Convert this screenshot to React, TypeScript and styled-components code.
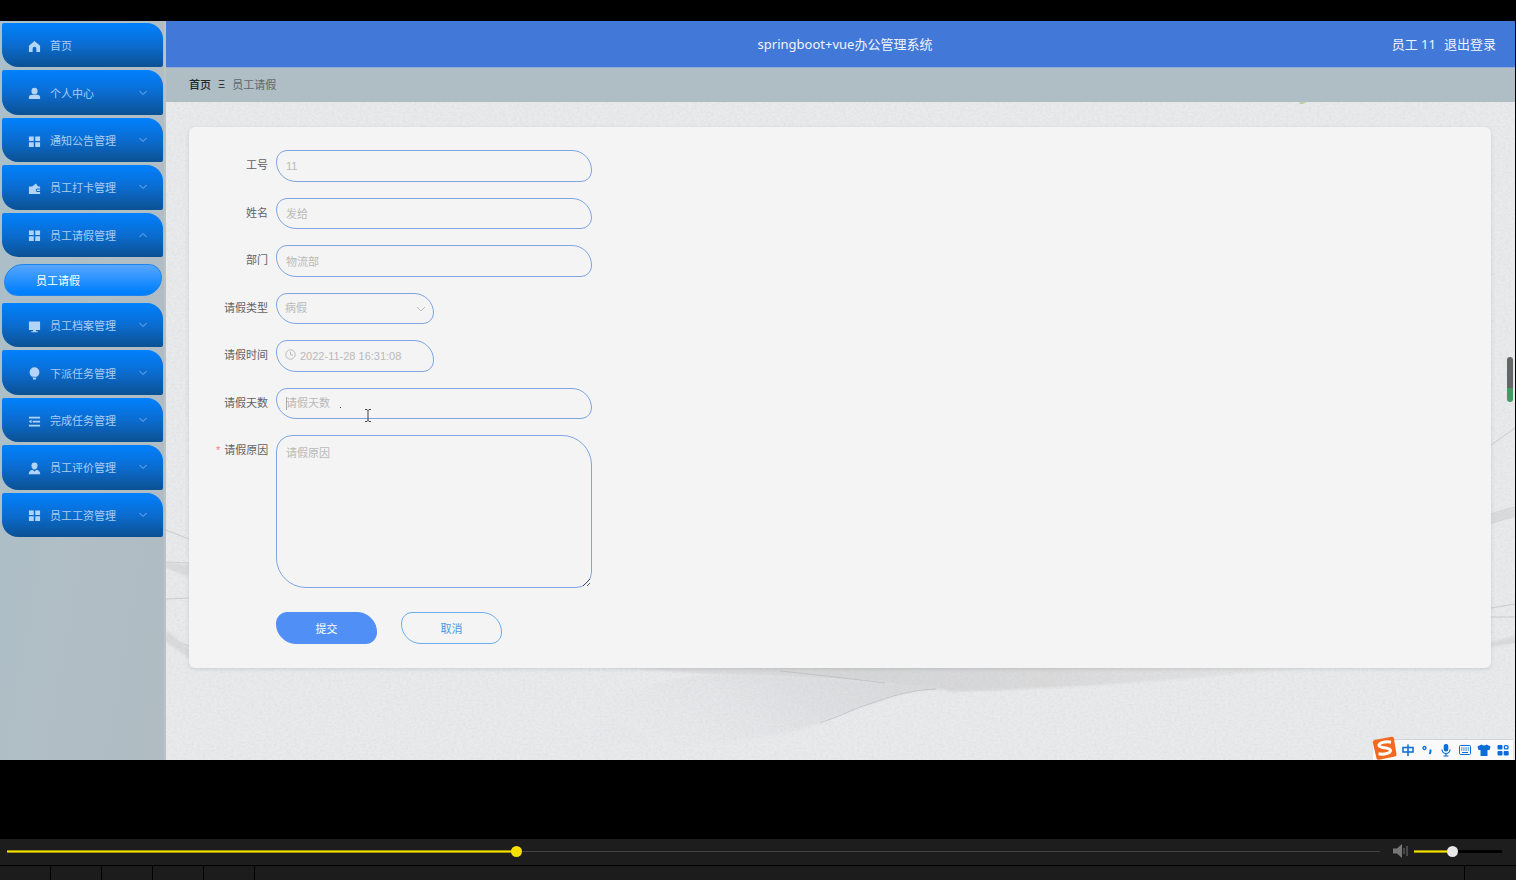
import React, { useState } from 'react';
import styled, { createGlobalStyle, css } from 'styled-components';

const GlobalStyle = createGlobalStyle`
  * { box-sizing: border-box; }
  body { margin: 0; background: #000; }
  body, button, input, select, textarea {
    font-family: "Liberation Sans", "Noto Sans CJK SC", sans-serif;
    font-size: 11px;
  }
  ul { list-style: none; margin: 0; padding: 0; }
  a { color: inherit; text-decoration: none; }
`;

const Page = styled.div`
  min-height: 100vh;
  display: flex;
  flex-direction: column;
  background: #000;
`;

const Screen = styled.div`
  position: relative;
  display: grid;
  grid-template-columns: 166px 1fr;
  margin: 21px 1px 0 0;
`;

/* ---------- sidebar ---------- */

const Sidebar = styled.nav`
  background: linear-gradient(100deg, #a9bfca 0%, #b0bec5 50%, #b0bbc2 100%);
  border-right: 2px solid #bcc3c7;
  padding: 2px 1px 0 2px;
`;

const Menu = styled.ul`
  display: flex;
  flex-direction: column;
  gap: 3px;
  height: 514px;
`;

const MenuItem = styled.li`
  flex: 1;
  display: flex;
`;

const MenuButton = styled.button`
  flex: 1;
  display: flex;
  align-items: center;
  gap: 9px;
  padding: 2px 16px 0 26px;
  border: 0;
  border-radius: 2px 16px 2px 16px;
  background: linear-gradient(180deg, #0081ff 0%, #0b6cd0 50%, #0b5193 100%);
  color: #a9cdf3;
  text-align: left;
  line-height: 16px;
`;

const MenuText = styled.span`
  flex: 1;
`;

const SubItem = styled.li`
  display: flex;
  height: 40px;
  padding: 4px 1px 4px 2px;
`;

const SubLink = styled.a`
  flex: 1;
  padding: 0 31px;
  line-height: 32px;
  border: 1px solid #1b84ee;
  border-radius: 20px 14px 20px 14px;
  background: linear-gradient(180deg, #58a6fd 0%, #0080ff 90%);
  color: #fff;
`;

/* ---------- header ---------- */

const Content = styled.div`
  display: flex;
  flex-direction: column;
  min-width: 0;
`;

const Header = styled.header`
  display: grid;
  grid-template-columns: 1fr auto 1fr;
  align-items: center;
  height: 47px;
  padding: 0 19px 0 28px;
  background: #4278d8;
  border-bottom: 1px solid #8fadd9;
  color: #f0f4fc;
  font-family: "Noto Sans", "Noto Sans CJK SC", sans-serif;
  font-size: 13px;
  line-height: 18px;
`;

const Title = styled.h1`
  grid-column: 2;
  margin: 0;
  font-size: 13px;
  font-weight: 400;
`;

const Account = styled.div`
  display: flex;
  justify-content: flex-end;
  gap: 8px;
`;

const Crumbs = styled.nav`
  display: flex;
  align-items: center;
  gap: 7px;
  height: 34px;
  padding: 0 23px 2px;
  background: #afbdc5;
  color: #5e676d;
`;

const CrumbHome = styled.a`
  color: #22282c;
  font-weight: 500;
`;

const CrumbMark = styled.span`
  color: #22282c;
`;

/* ---------- form ---------- */

const Main = styled.main`
  position: relative;
  flex: 1;
  padding: 25px 24px 92px 23px;
  background: #e9eaeb;
`;

const Backdrop = styled.svg`
  position: absolute;
  inset: 0;
  width: 100%;
  height: 100%;
`;

const Card = styled.form`
  position: relative;
  padding: 23px 27px 24px;
  border-radius: 6px;
  background: #f4f4f4;
  box-shadow: 0 1px 4px rgba(0, 0, 0, 0.12);
`;

const Fields = styled.div`
  display: grid;
  grid-template-rows: repeat(6, 1fr);
  row-gap: 16px;
  height: 269px;
`;

const Row = styled.div`
  display: grid;
  grid-template-columns: 52px 1fr;
  column-gap: 8px;
  min-height: 0;
`;

const Label = styled.label`
  color: #606266;
  line-height: 31px;
  text-align: right;
  white-space: nowrap;
`;

const Star = styled.span`
  color: #f08080;
  margin-right: 4px;
`;

const Control = styled.div<{ $short?: boolean }>`
  position: relative;
  display: flex;
  width: ${p => (p.$short ? 158 : 316)}px;
`;

const box = css`
  width: 100%;
  margin: 0;
  border: 1px solid #7da5e4;
  background: #f4f4f4;
  color: #b9b9b9;
  outline: none;
  opacity: 1;
  &::placeholder { color: #b9b9b9; opacity: 1; }
`;

const TextBox = styled.input<{ $icon?: boolean }>`
  ${box}
  height: 100%;
  padding: 0 10px 0 ${p => (p.$icon ? 23 : 9)}px;
  border-radius: 11px 20px 11px 20px;
`;

const SelectBox = styled.select`
  ${box}
  height: 100%;
  padding: 0 24px 0 8px;
  appearance: none;
  border-radius: 11px 20px 11px 20px;
`;

const TextArea = styled.textarea`
  ${box}
  height: 153px;
  padding: 9px;
  line-height: 17px;
  border-radius: 16px 30px 16px 30px;
  resize: both;
`;

const ReasonRow = styled(Row)`
  margin-top: 16px;
`;

const ClockMark = styled.svg`
  position: absolute;
  left: 9px;
  top: 9px;
`;

const SelectArrow = styled.svg`
  position: absolute;
  right: 8px;
  top: 12px;
`;

const Pointer = styled.svg`
  position: absolute;
  left: 8px;
  top: 7px;
`;

const Actions = styled.div`
  display: flex;
  gap: 24px;
  margin-top: 24px;
  padding-left: 60px;
`;

const ActionButton = styled.button<{ $primary?: boolean }>`
  width: 101px;
  height: 32px;
  border: 1px solid ${p => (p.$primary ? '#5090f6' : '#6cade9')};
  border-radius: 11px 20px 11px 20px;
  background: ${p => (p.$primary ? '#5090f6' : '#f4f4f4')};
  color: ${p => (p.$primary ? '#fff' : '#4a98e0')};
`;

/* ---------- overlays ---------- */

const ScrollPill = styled.div`
  position: absolute;
  right: 2px;
  top: 336px;
  width: 6px;
  height: 45px;
  border-radius: 3px;
  background: linear-gradient(180deg, #666 0 69%, #439a62 69% 100%);
`;

const ImeBar = styled.div`
  position: absolute;
  right: 2px;
  bottom: 0;
  display: flex;
  align-items: center;
  gap: 5px;
  height: 21px;
  padding: 0 3px 1px 28px;
  background: #fafafa;
  border-top: 1px solid #cfd3d8;
  color: #0a6cd6;
`;

const ImeLogo = styled.svg`
  position: absolute;
  left: -1px;
  bottom: 0;
`;

/* ---------- player ---------- */

const Player = styled.footer`
  margin-top: auto;
`;

const PlayerBar = styled.div`
  display: flex;
  align-items: center;
  height: 26px;
  padding: 0 14px 2px 7px;
  background: #1d1d1d;
`;

const Slider = styled.input<{ $fill: string; $thumb: string; $rest: string }>`
  appearance: none;
  height: 11px;
  margin: 0;
  background:
    linear-gradient(180deg, #a09200 0 1px, #f5e000 1px 2px, #a09200 2px 3px) left center / ${p => p.$fill} 3px no-repeat,
    ${p => p.$rest};
  &::-webkit-slider-thumb {
    appearance: none;
    width: 11px;
    height: 11px;
    border-radius: 50%;
    background: ${p => p.$thumb};
  }
`;

const SeekSlider = styled(Slider)`
  flex: 1;
  min-width: 0;
`;

const VolumeSlider = styled(Slider)`
  width: 88px;
`;

const Speaker = styled.svg`
  margin: 0 6px 0 13px;
`;

const Cells = styled.div`
  display: grid;
  grid-template-columns: repeat(5, 50px) 1fr 51px;
  column-gap: 1px;
  height: 15px;
  padding-top: 1px;
  background: #000;
`;

const Cell = styled.div`
  background: #1c1c1c;
`;

const icons: Record<string, React.ReactNode> = {
  home: <path d="M7 1 1 6.2V13h4V9.2a2 2 0 0 1 4 0V13h4V6.2z" />,
  user: (
    <>
      <ellipse cx="7" cy="4.3" rx="3.3" ry="3.6" />
      <path d="M1 13v-2Q1 8.3 4 8.3h6q3 0 3 2.7v2z" />
    </>
  ),
  grid: <path d="M1 1.5h5.2v5H1zM7.8 1.5H13v5H7.8zM1 7.8h5.2v5H1zM7.8 7.8H13v5H7.8z" />,
  wallet: (
    <path d="M1 4.800H4.500L8.500 1.500 10.800 4.800H13V7H10.200A1.900 1.900 0 0 0 10.200 10.800H13V13H1zM10.200 8H13V9.800H10.200A.9.900 0 0 1 10.200 8z" />
  ),
  screen: <path d="M1 1.500h12v9.300H1zM5.500 10.800h3v1.400h2v1H3.500v-1h2z" />,
  bulb: (
    <path d="M7 .3a5.300 5.300 0 0 1 5.300 5.300c0 2.200-1.300 3.800-2.800 5H4.500C3 9.400 1.700 7.800 1.700 5.600A5.300 5.300 0 0 1 7 .3zM5 11.400h4L8.500 13.500h-3z" />
  ),
  list: <path d="M1 1.800h12v1.900H1zM5 6.100h8v1.900H5zM1 10.400h12v1.900H1zM.8 7l3-1.900v3.800z" />,
  agent: (
    <>
      <path d="M3.700 4a3.300 3.500 0 0 1 6.600 0c0 2.200-1.500 4-3.300 4s-3.300-1.800-3.300-4z" />
      <path d="M.8 13.300c0-3 1.500-4.400 4-4.900L7 10.200l2.200-1.800c2.500.5 4 1.900 4 4.900z" />
    </>
  ),
};

const Icon = ({ name }: { name: string }) => (
  <svg width="13" height="13" viewBox="0 0 14 14" fill="#b4d4f5" aria-hidden="true">{icons[name]}</svg>
);

const Chevron = ({ up }: { up?: boolean }) => (
  <svg width="8" height="10" viewBox="0 0 8 10" fill="none" stroke="#7db4ee" aria-hidden="true">
    <path d={up ? 'M.5 6 4 2.500 7.500 6' : 'M.5 2 4 5.500 7.500 2'} />
  </svg>
);

const menu = [
  { icon: 'home', text: '首页', plain: true },
  { icon: 'user', text: '个人中心' },
  { icon: 'grid', text: '通知公告管理' },
  { icon: 'wallet', text: '员工打卡管理' },
  { icon: 'grid', text: '员工请假管理', child: '员工请假' },
  { icon: 'screen', text: '员工档案管理' },
  { icon: 'bulb', text: '下派任务管理' },
  { icon: 'list', text: '完成任务管理' },
  { icon: 'agent', text: '员工评价管理' },
  { icon: 'grid', text: '员工工资管理' },
];

const PaperBackdrop = () => (
  <Backdrop viewBox="0 0 1349 658" preserveAspectRatio="none" aria-hidden="true">
    <defs>
      <filter id="grain" x="0" y="0" width="100%" height="100%">
        <feTurbulence type="fractalNoise" baseFrequency="0.35 0.5" numOctaves="2" seed="4" />
        <feColorMatrix values="0 0 0 0 0.4  0 0 0 0 0.4  0 0 0 0 0.42  0.5 0 0 0 -0.18" />
      </filter>
      <filter id="soft"><feGaussianBlur stdDeviation="1" /></filter>
      <linearGradient id="fold" x1="0" x2="1" y1="0" y2="0">
        <stop offset="0" stopColor="#d6d6d8" stopOpacity="0.400" />
        <stop offset="0.350" stopColor="#d6d7d8" />
        <stop offset="0.600" stopColor="#dadadb" />
        <stop offset="1" stopColor="#e0e0e1" stopOpacity="0.200" />
      </linearGradient>
      <linearGradient id="valley" x1="1" x2="0" y1="0" y2="0.300">
        <stop offset="0" stopColor="#d6d8da" />
        <stop offset="0.500" stopColor="#dfe1e3" />
        <stop offset="1" stopColor="#e6e8ea" stopOpacity="0.100" />
      </linearGradient>
    </defs>
    <path d="M400 560H1200Q1000 580 880 586T784 588Q740 586 719 581Q640 574 560 573Q470 568 400 560Z" fill="url(#fold)" filter="url(#soft)" />
    <path d="M784 586C734 588 720 598 694 606S640 630 594 635Q500 650 420 640C440 600 480 572 560 573Q640 574 719 581Z" fill="url(#valley)" filter="url(#soft)" />
    <g fill="none" stroke="#babcbf" strokeWidth="1">
      <path d="M614 569Q654 573 719 581" opacity="0.700" />
      <path d="M770 587C734 589 720 597 694 605Q674 614 654 621" opacity="0.700" />
    </g>
    <g fill="none" stroke="#cbccce" strokeWidth="1">
      <path d="M0 428 23 437M0 460 23 461M0 497 23 496M0 536 23 544" />
      <path d="M1325 343 1349 326M1325 412 1349 405M1325 421 1349 414M1325 506 1349 502M1325 515H1349M1325 543 1349 540" />
    </g>
    <path d="M0 460 23 463V475L0 466ZM0 528 23 546V556L0 540Z" fill="#dadbdc" filter="url(#soft)" />
    <path d="M1325 412 1349 405V414L1325 421ZM1325 540 1349 534V541L1325 545Z" fill="#dadbdc" filter="url(#soft)" />
    <path d="M1133 0h8l-4 2h-3z" fill="#b9d3a4" />
    <rect width="1349" height="658" filter="url(#grain)" opacity="0.500" />
  </Backdrop>
);

const ImeIcons = () => (
  <>
    <svg width="14" height="14" viewBox="0 0 14 14" fill="none" stroke="#0a6cd6" strokeWidth="1.500"><path d="M2 4.500h10v4.500H2zM7 1.500v11.500" /></svg>
    <svg width="14" height="14" viewBox="0 0 14 14" fill="none" stroke="#0a6cd6" strokeWidth="1.300"><circle cx="4.500" cy="5" r="1.500" /><path d="M9.500 7.500h1v1.500l-1 2" strokeWidth="1.800" /></svg>
    <svg width="14" height="14" viewBox="0 0 14 14" fill="none" stroke="#0a6cd6" strokeWidth="1.200"><rect x="5.300" y="1.500" width="3.400" height="6.500" rx="1.700" fill="#0a6cd6" /><path d="M3 6.500a4 4 0 0 0 8 0M7 10.500v2.500M4.500 13h5" /></svg>
    <svg width="14" height="14" viewBox="0 0 14 14" fill="none" stroke="#0a6cd6"><rect x="1.500" y="2.500" width="11" height="9" rx="1" /><path d="M3 5h8M3 7h8" strokeDasharray="1.500 .7" /><path d="M4 9.500h6" /></svg>
    <svg width="14" height="14" viewBox="0 0 14 14" fill="#0a6cd6"><path d="M4.500 1.500Q7 3.500 9.500 1.500L13.500 3.500 12.500 7H10.500V13H3.500V7H1.500L.5 3.500z" /></svg>
    <svg width="14" height="14" viewBox="0 0 14 14" fill="#0a6cd6"><rect x="1.500" y="2" width="5" height="4.500" rx="1" /><rect x="1.500" y="8" width="5" height="4.500" rx="1" /><rect x="7.700" y="8" width="5" height="4.500" rx="1" /><rect x="8.400" y="2.600" width="3.600" height="3.300" rx="1" fill="none" stroke="#0a6cd6" strokeWidth="1.300" /></svg>
  </>
);

export default function App() {
  const [seek, setSeek] = useState(370);
  const [volume, setVolume] = useState(43);

  return (
    <>
      <GlobalStyle />
      <Page>
        <Screen>
          <Sidebar>
            <Menu>
              {menu.map(item => (
                <React.Fragment key={item.text}>
                  <MenuItem>
                    <MenuButton type="button">
                      <Icon name={item.icon} />
                      <MenuText>{item.text}</MenuText>
                      {!item.plain && <Chevron up={!!item.child} />}
                    </MenuButton>
                  </MenuItem>
                  {item.child && <SubItem><SubLink href="#leave">{item.child}</SubLink></SubItem>}
                </React.Fragment>
              ))}
            </Menu>
          </Sidebar>

          <Content>
            <Header>
              <Title>springboot+vue办公管理系统</Title>
              <Account>
                <span>员工 11</span>
                <a href="#logout">退出登录</a>
              </Account>
            </Header>
            <Crumbs>
              <CrumbHome href="#home">首页</CrumbHome>
              <CrumbMark>Ξ</CrumbMark>
              <span>员工请假</span>
            </Crumbs>
            <Main>
              <PaperBackdrop />
              <Card onSubmit={e => e.preventDefault()}>
                <Fields>
                  <Row>
                    <Label htmlFor="no">工号</Label>
                    <Control><TextBox id="no" readOnly value="11" /></Control>
                  </Row>
                  <Row>
                    <Label htmlFor="name">姓名</Label>
                    <Control><TextBox id="name" readOnly value="发给" /></Control>
                  </Row>
                  <Row>
                    <Label htmlFor="dept">部门</Label>
                    <Control><TextBox id="dept" readOnly value="物流部" /></Control>
                  </Row>
                  <Row>
                    <Label htmlFor="type">请假类型</Label>
                    <Control $short>
                      <SelectBox id="type"><option>病假</option></SelectBox>
                      <SelectArrow width="10" height="8" viewBox="0 0 10 8" fill="none" stroke="#bbb"><path d="M1 2 5 6 9 2" /></SelectArrow>
                    </Control>
                  </Row>
                  <Row>
                    <Label htmlFor="time">请假时间</Label>
                    <Control $short>
                      <TextBox id="time" $icon defaultValue="2022-11-28 16:31:08" />
                      <ClockMark width="11" height="11" viewBox="0 0 11 11" fill="none" stroke="#bbb">
                        <circle cx="5.500" cy="5.500" r="4.700" /><path d="M5.500 2.500V6H8" />
                      </ClockMark>
                    </Control>
                  </Row>
                  <Row>
                    <Label htmlFor="days">请假天数</Label>
                    <Control>
                      <TextBox id="days" placeholder="请假天数" />
                      <Pointer width="92" height="28" viewBox="0 0 92 28" fill="none" stroke="#444" aria-hidden="true">
                        <path d="M2.500 2v13" stroke="#aaa" />
                        <path d="M56 12.500h1" />
                        <path d="M81 14.500h2l1 1 1-1h2M84 15v11M81 26.500h2l1-1 1 1h2" />
                      </Pointer>
                    </Control>
                  </Row>
                </Fields>
                <ReasonRow>
                  <Label htmlFor="reason"><Star>*</Star>请假原因</Label>
                  <Control><TextArea id="reason" placeholder="请假原因" /></Control>
                </ReasonRow>
                <Actions>
                  <ActionButton type="submit" $primary>提交</ActionButton>
                  <ActionButton type="button">取消</ActionButton>
                </Actions>
              </Card>
            </Main>
          </Content>

          <ScrollPill />
          <ImeBar>
            <ImeLogo width="25" height="24" viewBox="0 0 25 24" aria-hidden="true">
              <path d="M2.500 4 19.500.8q2-.3 2.400 1.500L24.500 18q.3 2-1.500 2.500L7 23.700q-2 .3-2.500-1.500L.8 6.500Q.4 4.500 2.500 4z" fill="#f26a21" />
              <path d="M19 6.200C14 5.200 6.500 6.500 7 9.500c.5 3 11.500 1.500 11.500 5 0 3-7 4.300-12 3.300" fill="none" stroke="#fff" strokeWidth="3" />
            </ImeLogo>
            <ImeIcons />
          </ImeBar>
        </Screen>

        <Player>
          <PlayerBar>
            <SeekSlider
              type="range" aria-label="Seek" min={0} max={1000} value={seek}
              onChange={e => setSeek(+e.target.value)}
              $fill={`${seek / 10}%`} $thumb="#f5e000"
              $rest="linear-gradient(#444, #444) center / 100% 1px no-repeat"
            />
            <Speaker width="15" height="14" viewBox="0 0 15 14" fill="#777" aria-hidden="true">
              <path d="M0 4.500h4L9 0v14L4 9.500H0zM10.500 4h1v6h-1zM13.500 2h1v10h-1z" />
            </Speaker>
            <VolumeSlider
              type="range" aria-label="Volume" min={0} max={100} value={volume}
              onChange={e => setVolume(+e.target.value)}
              $fill={`${volume}%`} $thumb="#e8e8e8"
              $rest="linear-gradient(#000, #000) center / 100% 3px no-repeat"
            />
          </PlayerBar>
          <Cells>
            {[0, 1, 2, 3, 4, 5, 6].map(n => <Cell key={n} />)}
          </Cells>
        </Player>
      </Page>
    </>
  );
}
